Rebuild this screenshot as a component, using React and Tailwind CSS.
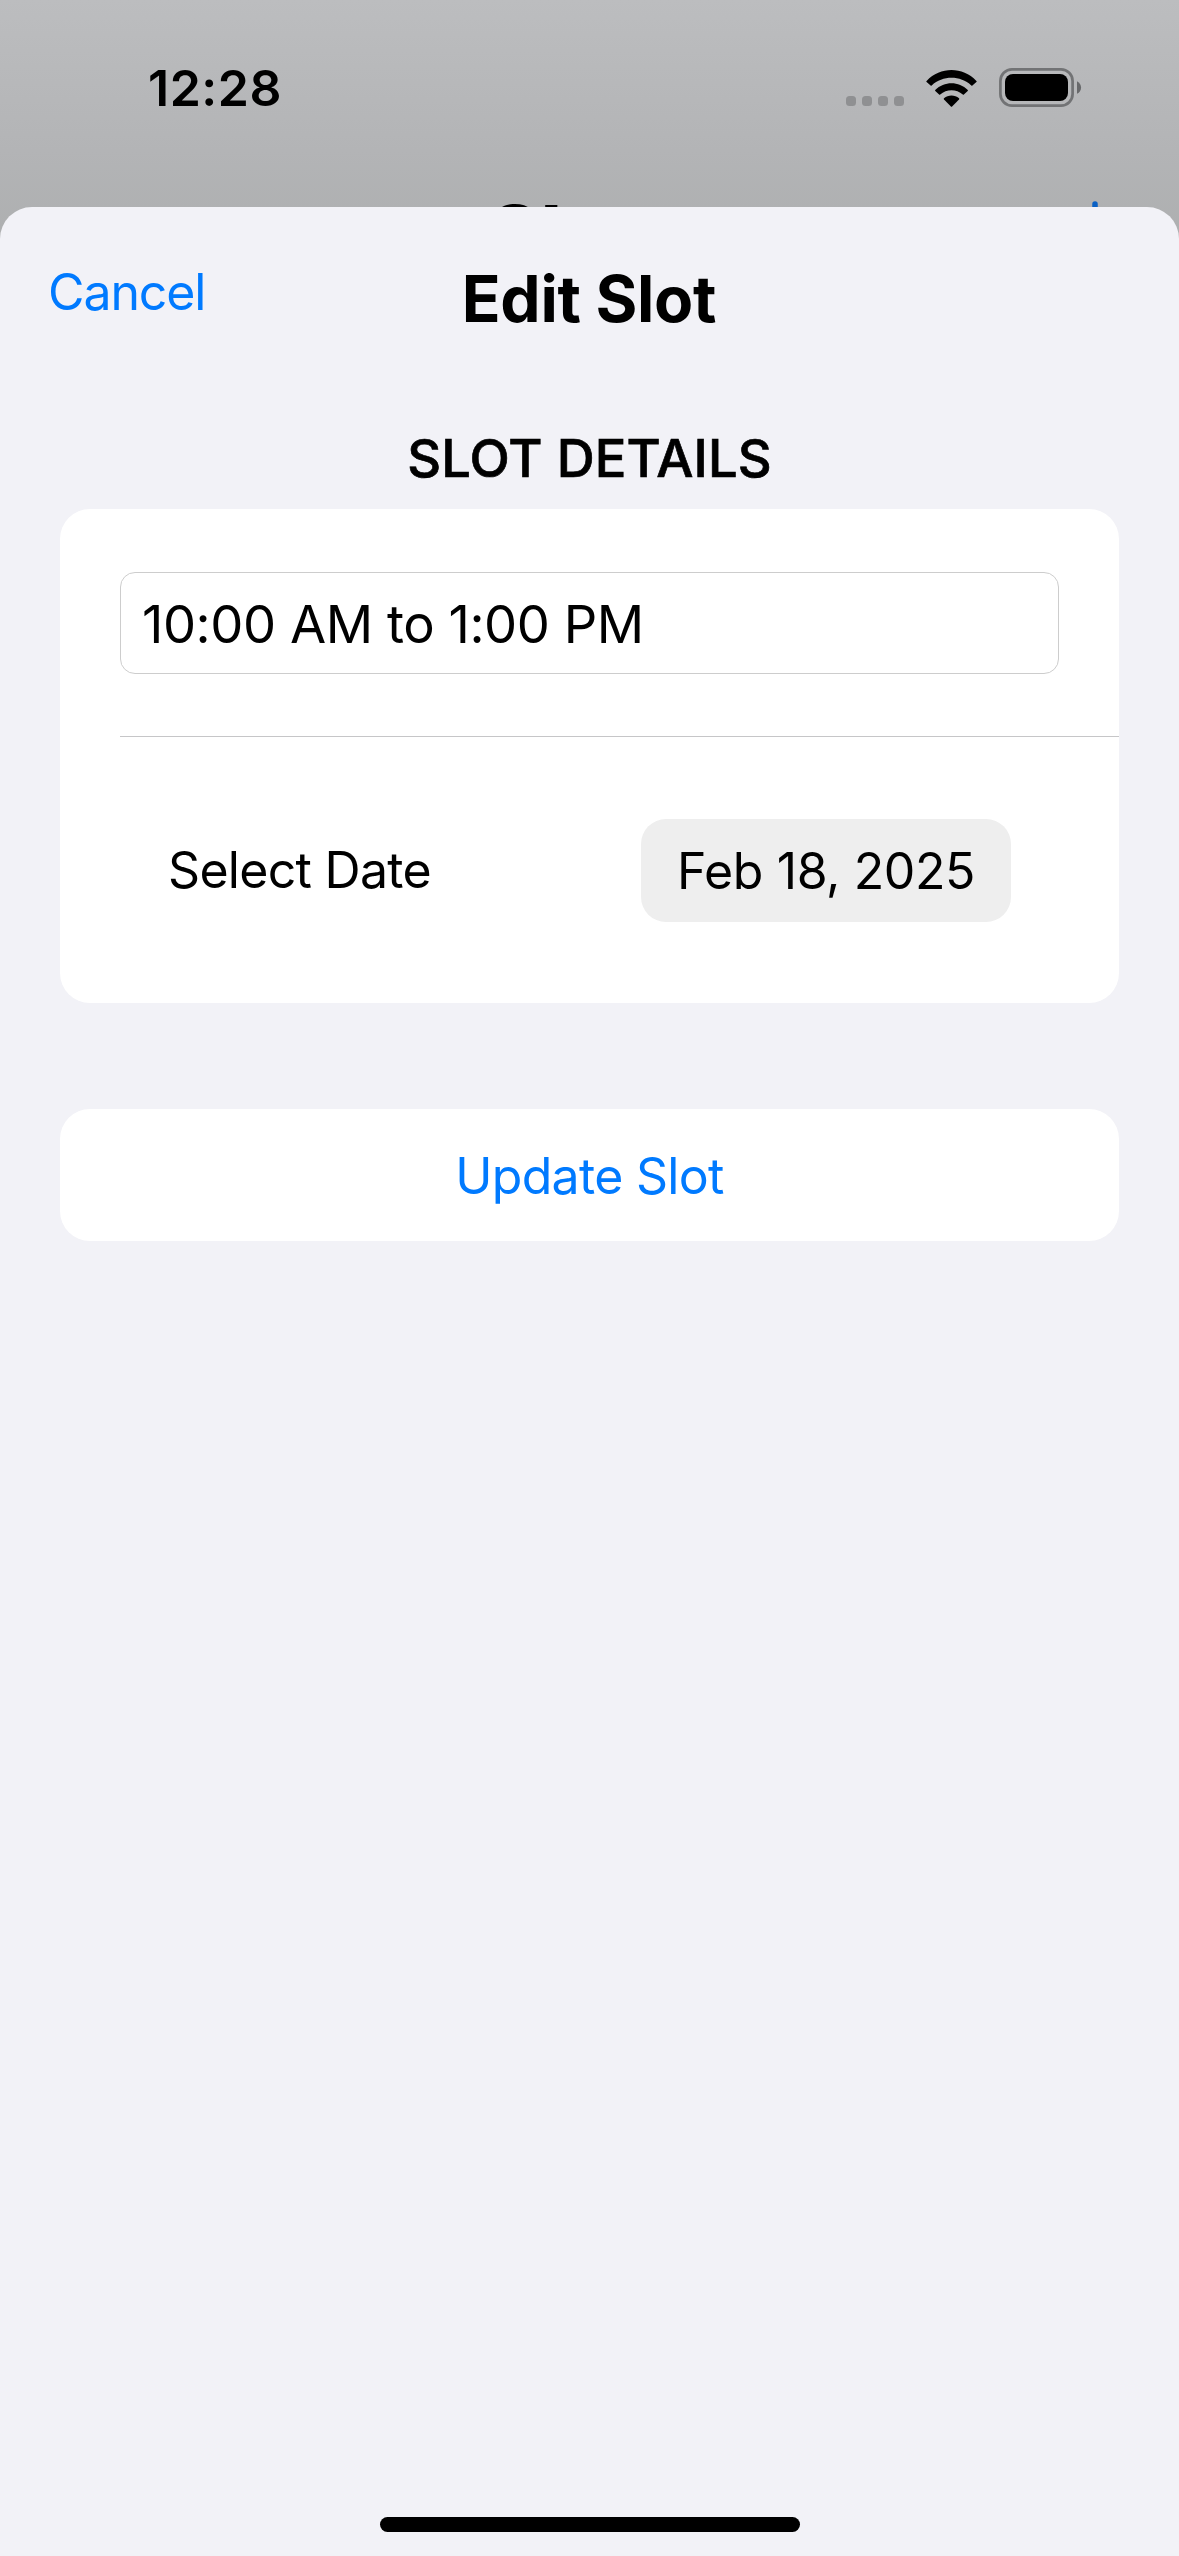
function StatusBar() {
  return (
    <div className="flex h-[176px] items-center justify-between pl-[148px] pr-[97px]">
      <span className="text-[50px] leading-none font-semibold tracking-[0.5px] text-black">12:28</span>
      <div className="flex items-center">
        <div className="mt-[26px] mr-[22px] flex gap-[6px]">
          <i className="size-[10px] rounded-[3.5px] bg-[#8f9092]" />
          <i className="size-[10px] rounded-[3.5px] bg-[#8f9092]" />
          <i className="size-[10px] rounded-[3.5px] bg-[#8f9092]" />
          <i className="size-[10px] rounded-[3.5px] bg-[#8f9092]" />
        </div>
        <WifiIcon />
        <BatteryIcon />
      </div>
    </div>
  );
}

function WifiIcon() {
  return (
    <svg className="mr-[22px] h-[37px] w-[51px]" viewBox="0 0 51 37" fill="black">
      <path d="M0.6 10.9 Q0 11.5 0.6 12.1 L4.6 15.6 Q5.1 16 5.7 15.5 C16.7 5.3 34.3 5.3 45.3 15.5 Q45.9 16 46.4 15.6 L50.4 12.1 Q51 11.5 50.4 10.9 C36.5 -3.6 14.5 -3.6 0.6 10.9 Z" />
      <path d="M9.2 20 Q8.8 20.5 9.3 21 L13.1 24.6 Q13.6 25 14.2 24.6 C20.5 18.9 30.5 18.9 36.8 24.6 Q37.4 25 37.9 24.6 L41.7 21 Q42.2 20.5 41.8 20 C32.8 10.9 18.2 10.9 9.2 20 Z" />
      <path d="M18 28.3 Q17.5 28.9 18 29.5 L24.9 36.6 Q25.5 37.1 26.1 36.6 L33 29.5 Q33.5 28.9 33 28.3 C28.8 24.6 22.2 24.6 18 28.3 Z" />
    </svg>
  );
}

function BatteryIcon() {
  return (
    <svg className="mb-px h-[39px] w-[83px]" viewBox="0 0 83 39">
      <rect x="1.4" y="1.4" width="72.2" height="36.2" rx="11.6" fill="none" stroke="#727375" strokeWidth="2.7" />
      <rect x="6" y="6" width="63" height="27" rx="8" fill="black" />
      <path d="M78 13.2 C83.4 15.6 83.4 23.4 78 25.8 Z" fill="#68696b" />
    </svg>
  );
}

function Backdrop() {
  return (
    <div className="absolute inset-x-0 top-0 h-[300px] overflow-hidden bg-linear-to-b from-[#bcbdbf] via-[#b3b4b6] via-50% to-[#aaacac]">
      <StatusBar />
      <div className="relative flex h-[119px] items-center justify-center">
        <span className="pr-[8px] text-[83px] leading-none font-bold tracking-[-1.5px] text-black">Slots</span>
        <svg className="absolute top-[25px] right-[59px] size-[50px]" viewBox="0 0 50 50">
          <path d="M25 3 V47 M3 25 H47" stroke="#0a60c4" strokeWidth="5.5" strokeLinecap="round" />
        </svg>
      </div>
    </div>
  );
}

export default function App() {
  return (
    <div className="relative flex h-[2556px] w-[1179px] flex-col overflow-hidden bg-[#b0b2b2] pt-[207px] font-['Inter',sans-serif] text-black">
      <Backdrop />
      <main className="relative flex flex-1 flex-col rounded-t-[32px] bg-[#f2f2f7]">
        <header className="grid h-[184px] grid-cols-[1fr_auto_1fr] items-center">
          <button className="mb-[14px] justify-self-start pl-[48px] text-[50px] leading-none tracking-[-1.1px] text-[#007aff]">
            Cancel
          </button>
          <h1 className="pr-px text-[64px] leading-none font-bold tracking-[-0.3px]">Edit Slot</h1>
        </header>

        <section className="px-[60px]">
          <h2 className="mt-4 text-center text-[52.5px] leading-[102px] font-medium tracking-[0.1px] [-webkit-text-stroke:0.7px_black]">
            SLOT DETAILS
          </h2>
          <div className="flex h-[494px] flex-col rounded-[30px] bg-white">
            <div className="px-[60px] pt-[63px] pb-[62px]">
              <div className="flex h-[102px] items-center rounded-[15px] border border-[#cdcdcd] pt-[2px] pl-[21px] text-[52.5px] leading-none tracking-[-0.45px]">
                10:00 AM to 1:00 PM
              </div>
            </div>
            <div className="ml-[60px] h-px bg-[#c6c6c8]" />
            <div className="flex flex-1 items-center justify-between pr-[108px] pl-[108px]">
              <span className="text-[50px] leading-none tracking-[-0.7px]">Select Date</span>
              <button className="flex h-[103px] w-[370px] items-center justify-center rounded-[25px] bg-[#eeeeee] pt-[2px] text-[50px] leading-none tracking-[-0.4px]">
                Feb 18, 2025
              </button>
            </div>
          </div>
        </section>

        <div className="mt-[106px] px-[60px]">
          <button className="flex h-[132px] w-full items-center justify-center rounded-[30px] bg-white pt-[2px] text-[50px] leading-none tracking-[-0.7px] text-[#007aff]">
            Update Slot
          </button>
        </div>

        <div className="mx-auto mt-auto mb-[24px] h-[15px] w-[420px] rounded-full bg-black" />
      </main>
    </div>
  );
}
